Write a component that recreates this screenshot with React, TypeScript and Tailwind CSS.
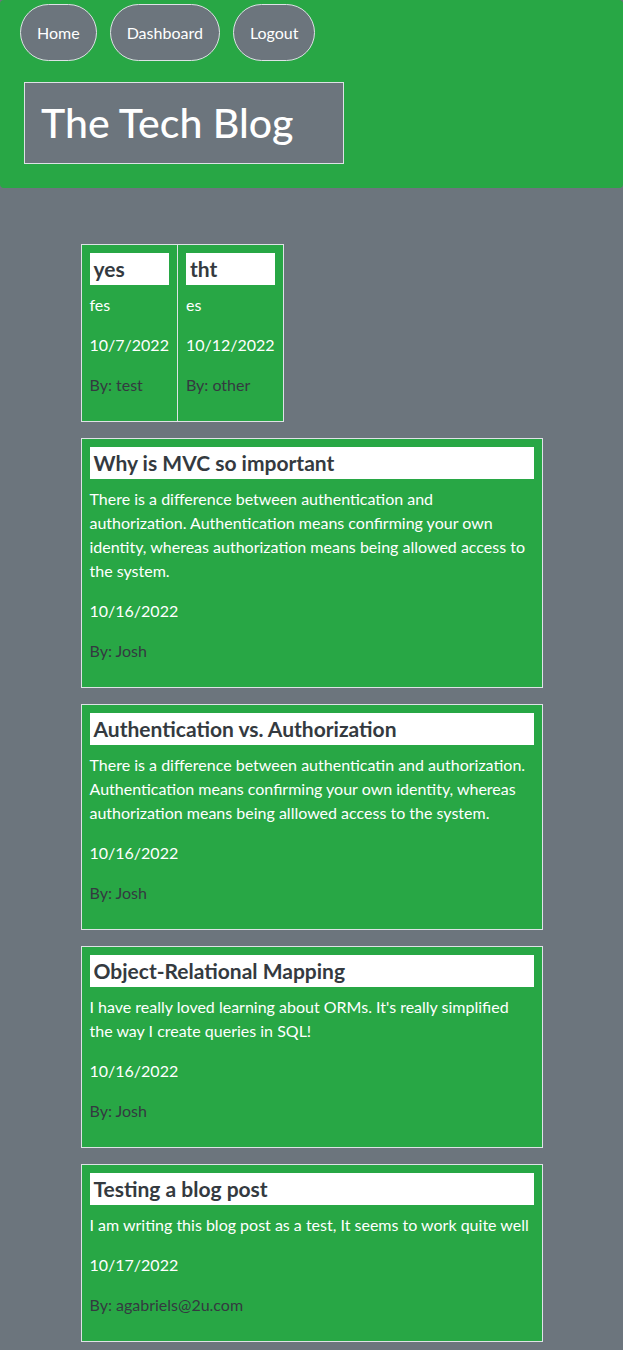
const NAV = ['Home', 'Dashboard', 'Logout']

const SMALL_POSTS = [
  { title: 'yes', body: 'fes', date: '10/7/2022', author: 'test' },
  { title: 'tht', body: 'es', date: '10/12/2022', author: 'other' },
]

const POSTS = [
  {
    title: 'Why is MVC so important',
    body: 'There is a difference between authentication and authorization. Authentication means confirming your own identity, whereas authorization means being allowed access to the system.',
    date: '10/16/2022',
    author: 'Josh',
  },
  {
    title: 'Authentication vs. Authorization',
    body: 'There is a difference between authenticatin and authorization. Authentication means confirming your own identity, whereas authorization means being alllowed access to the system.',
    date: '10/16/2022',
    author: 'Josh',
  },
  {
    title: 'Object-Relational Mapping',
    body: "I have really loved learning about ORMs. It's really simplified the way I create queries in SQL!",
    date: '10/16/2022',
    author: 'Josh',
  },
  {
    title: 'Testing a blog post',
    body: 'I am writing this blog post as a test, It seems to work quite well',
    date: '10/17/2022',
    author: 'agabriels@2u.com',
  },
]

type Post = { title: string; body: string; date: string; author: string }

function PostCard({ post, className = '' }: { post: Post; className?: string }) {
  return (
    <div className={`border border-[#dee2e6] bg-[#28a745] p-2 ${className}`}>
      <h3 className="mb-2 bg-white px-1 py-1 text-[21px] font-bold leading-[24px] text-[#343a40]">
        {post.title}
      </h3>
      <p className="mb-4 text-white">{post.body}</p>
      <p className="mb-4 text-white">{post.date}</p>
      <p className="mb-4 text-[#343a40]">By: {post.author}</p>
    </div>
  )
}

export default function App() {
  return (
    <div className="min-h-[1350px] bg-[#6c757d] text-[16px] leading-[24px] font-['Lato','Noto_Sans',sans-serif]">
      {/* Header */}
      <header className="rounded bg-[#28a745] pl-5 pt-1 pb-6">
        <nav className="flex gap-[13px]">
          {NAV.map(label => (
            <a
              key={label}
              href="#"
              className="flex h-[57px] items-center rounded-full border border-[#dee2e6] bg-[#6c757d] px-4 text-white"
            >
              {label}
            </a>
          ))}
        </nav>
        <div className="ml-1 mt-[21px] w-[320px] border border-[#dee2e6] bg-[#6c757d] p-4">
          <h1 className="text-[41px] font-medium leading-[48px] text-white">The Tech Blog</h1>
        </div>
      </header>

      {/* Posts */}
      <main className="mx-auto mt-14 flex w-[462px] flex-col gap-4 pb-2">
        <div className="flex">
          {SMALL_POSTS.map((post, i) => (
            <PostCard key={post.title} post={post} className={i > 0 ? '-ml-px' : ''} />
          ))}
        </div>
        {POSTS.map(post => (
          <PostCard key={post.title} post={post} />
        ))}
      </main>
    </div>
  )
}
